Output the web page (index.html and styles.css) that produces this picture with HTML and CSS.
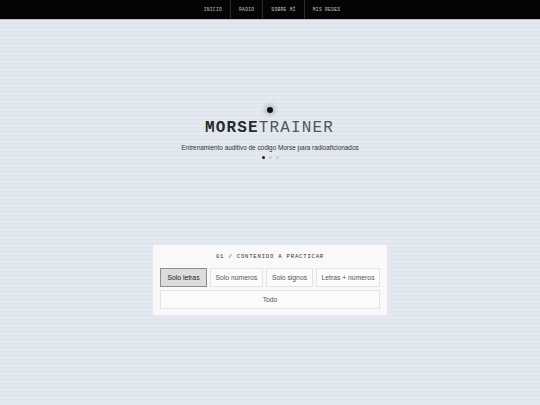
FILE: index.html
```html
<!DOCTYPE html>
<html lang="es">
<head>
<meta charset="utf-8">
<title>Morse Trainer</title>
<link rel="stylesheet" href="styles.css">
</head>
<body>
<nav class="topnav">
  <a class="nav-item" href="#">INICIO</a>
  <a class="nav-item" href="#">RADIO</a>
  <a class="nav-item" href="#">SOBRE MÍ</a>
  <a class="nav-item" href="#">MIS REDES</a>
</nav>
<main class="hero">
  <div class="signal"></div>
  <h1 class="title"><span class="t-bold">MORSE</span><span class="t-light">TRAINER</span></h1>
  <p class="subtitle">Entrenamiento auditivo de código Morse para radioaficionados</p>
  <div class="steps">
    <span class="step active"></span>
    <span class="step"></span>
    <span class="step"></span>
  </div>
  <section class="card">
    <h2 class="card-title">01 / CONTENIDO A PRACTICAR</h2>
    <div class="options">
      <button class="opt selected">Solo letras</button>
      <button class="opt">Solo números</button>
      <button class="opt">Solo signos</button>
      <button class="opt">Letras + números</button>
      <button class="opt wide">Todo</button>
    </div>
  </section>
</main>
</body>
</html>
```
FILE: styles.css
```css
* { box-sizing: border-box; }
html, body { margin: 0; padding: 0; }
body {
  width: 540px;
  height: 405px;
  overflow: hidden;
  background-color: #e3e9f1;
  background-image: repeating-linear-gradient(to bottom, rgba(0,0,0,0) 0px, rgba(0,0,0,0) 3px, rgba(120,130,150,0.05) 3px, rgba(120,130,150,0.05) 4px);
  font-family: "Liberation Sans", Arial, sans-serif;
  -webkit-font-smoothing: antialiased;
}
.topnav {
  height: 20px;
  background: #050505;
  border-bottom: 1px solid #b9bec6;
  display: flex;
  justify-content: center;
  align-items: stretch;
  padding-left: 4px;
}
.nav-item {
  display: flex;
  align-items: center;
  justify-content: center;
  padding: 0 8px 0 8px;
  color: #c4c4c4;
  text-decoration: none;
  font-family: "Liberation Mono", "DejaVu Sans Mono", monospace;
  font-size: 4.6px;
  letter-spacing: 0.3px;
  border-right: 1px solid #2a2a2a;
}
.nav-item:last-child { border-right: none; }
.hero {
  display: flex;
  flex-direction: column;
  align-items: center;
  padding-top: 87px;
}
.signal {
  width: 6px;
  height: 6px;
  border-radius: 50%;
  background: #111;
  box-shadow: 0 0 5px 2px rgba(0,0,0,0.22);
}
.title {
  margin: 5px 0 0 0;
  font-family: "Liberation Mono", "DejaVu Sans Mono", monospace;
  font-size: 16px;
  line-height: 20px;
  letter-spacing: 1.15px;
  font-weight: normal;
  padding-right: 1px;
}
.t-bold { font-weight: bold; color: #2a2a2a; }
.t-light { color: #555; }
.subtitle {
  margin: 5px 0 0 0;
  font-size: 6.4px;
  line-height: 10px;
  color: #333;
}
.steps {
  display: flex;
  gap: 4px;
  margin-top: 3px;
  align-items: center;
}
.step {
  width: 3px;
  height: 3px;
  border-radius: 50%;
  background: #c9ced6;
}
.step.active { background: #1a1a1a; }
.card {
  margin-top: 85px;
  width: 236px;
  background: #f9f9f9;
  border: 1px solid #e6e6e6;
  padding: 7px 7px 6px 7px;
}
.card-title {
  margin: 0 0 6px 0;
  text-align: center;
  font-family: "Liberation Mono", "DejaVu Sans Mono", monospace;
  font-weight: normal;
  font-size: 5.6px;
  letter-spacing: 0.8px;
  color: #333;
  line-height: 10px;
}
.options {
  display: grid;
  grid-template-columns: 47px 53px 47px 64px;
  gap: 3px;
  justify-content: center;
}
.opt {
  height: 19px;
  border: 1px solid #e3e3e3;
  background: #fbfbfb;
  font-family: "Liberation Sans", Arial, sans-serif;
  font-size: 6.8px;
  color: #555;
  padding: 0;
}
.opt.selected {
  background: #dcdcdc;
  border-color: #8d8d8d;
  color: #222;
}
.opt.wide {
  grid-column: 1 / -1;
}
```
